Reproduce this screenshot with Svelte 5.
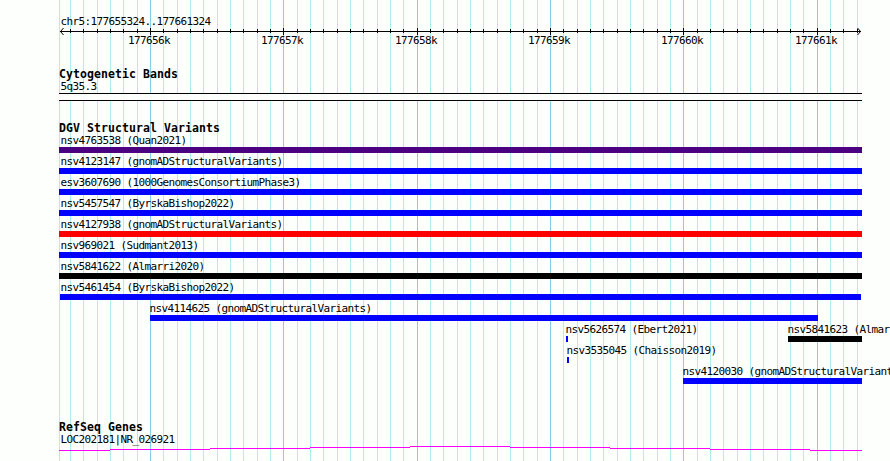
<script>
  const start = 177655324
  const end = 177661324
  const left = 60
  const scale = 800 / (end - start)

  const toX = (pos) => Math.round(left + (pos - start) * scale)

  const ticks = []
  for (let pos = Math.ceil(start / 100) * 100; pos <= end; pos += 100) {
    ticks.push({ pos, x: toX(pos), major: pos % 1000 === 0 })
  }
  const majorTicks = ticks.filter(t => t.major)

  // x1 / x2 are panel pixels, pad is the label offset from the bar
  const rows = [
    [{ name: 'nsv4763538 (Quan2021)', x1: 59, x2: 862, pad: 1.4, type: 'complex' }],
    [{ name: 'nsv4123147 (gnomADStructuralVariants)', x1: 59, x2: 862, pad: 1.4, type: 'gain' }],
    [{ name: 'esv3607690 (1000GenomesConsortiumPhase3)', x1: 59, x2: 862, pad: 1.4, type: 'gain' }],
    [{ name: 'nsv5457547 (ByrskaBishop2022)', x1: 59, x2: 862, pad: 1.4, type: 'gain' }],
    [{ name: 'nsv4127938 (gnomADStructuralVariants)', x1: 59, x2: 862, pad: 1.4, type: 'loss' }],
    [{ name: 'nsv969021 (Sudmant2013)', x1: 59, x2: 862, pad: 1.4, type: 'gain' }],
    [{ name: 'nsv5841622 (Almarri2020)', x1: 59, x2: 862, pad: 1.4, type: 'other' }],
    [{ name: 'nsv5461454 (ByrskaBishop2022)', x1: 60, x2: 861, pad: 0.4, type: 'gain' }],
    [{ name: 'nsv4114625 (gnomADStructuralVariants)', x1: 150, x2: 818, pad: -0.6, type: 'gain' }],
    [
      { name: 'nsv5626574 (Ebert2021)', x1: 566, x2: 568, pad: -0.6, type: 'gain' },
      { name: 'nsv5841623 (Almarri2020)', x1: 788, x2: 862, pad: -0.6, type: 'other' },
    ],
    [{ name: 'nsv3535045 (Chaisson2019)', x1: 567, x2: 569, pad: -0.6, type: 'gain' }],
    [{ name: 'nsv4120030 (gnomADStructuralVariants)', x1: 683, x2: 862, pad: -0.6, type: 'gain' }],
  ]

  const intron = 'M59 4.5H110M110 3.5H210M210 2.5H310M310 1.5H410M410 .5H510M510 1.5H610M610 2.5H710M710 3.5H810M810 4.5H862'
</script>

<main class="browser">
  <svg class="grid" width="890" height="461" aria-hidden="true">
    <rect class="minor" x="59" y="0" width="1" height="461" />
    {#each ticks as tick (tick.pos)}
      <rect class={tick.major ? 'major' : 'minor'} x={tick.x} y="0" width="1" height="461" />
    {/each}
  </svg>

  <header>
    <p class="label inset">chr5:177655324..177661324</p>
    <svg class="ruler" width="890" height="39">
      <rect x="60" y="3" width="801" height="1" />
      <path d="M63.5 0L60.5 3.5L63.5 7M857.5 0L860.5 3.5L857.5 7" />
      {#each ticks as tick (tick.pos)}
        <rect x={tick.x} y={tick.major ? 0 : 1} width="1" height={tick.major ? 7 : 4} />
      {/each}
      {#each majorTicks as tick (tick.pos)}
        <text x={tick.x - 22} y="16">{tick.pos / 1000}k</text>
      {/each}
    </svg>
  </header>

  <section class="cyto">
    <h2>Cytogenetic Bands</h2>
    <p class="label inset">5q35.3</p>
    <div class="band"></div>
  </section>

  <section class="variants">
    <h2>DGV Structural Variants</h2>
    <div class="rows">
      {#each rows as row}
        <div class="row">
          {#each row as f (f.name)}
            <div class="feature" style="margin-left:{f.x1}px">
              <p class="label" style="text-indent:{f.pad}px">{f.name}</p>
              <div class="bar {f.type}" style="width:{f.x2 - f.x1}px"></div>
            </div>
          {/each}
        </div>
      {/each}
    </div>
  </section>

  <section class="genes">
    <h2>RefSeq Genes</h2>
    <p class="label inset">LOC202181|NR_026921</p>
    <svg class="gene" width="890" height="15">
      <path d={intron} />
    </svg>
  </section>
</main>

<style>
  :global(body) {
    margin: 0;
    background: #fcfffc;
  }

  .browser {
    position: relative;
    display: flow-root;
    width: 890px;
    height: 461px;
    overflow: hidden;
    background: #fcfffc;
    color: #000;
    font-family: 'DejaVu Sans Mono', 'Liberation Mono', monospace;
  }

  .grid {
    position: absolute;
    inset: 0;
  }

  .minor { fill: #afeeee; }
  .major { fill: #87ceeb; }

  header,
  section {
    position: relative;
  }

  svg { display: block; }

  header {
    height: 51px;
    padding-top: 16px;
  }

  .label,
  .ruler text {
    font-size: 11px;
    letter-spacing: -0.622px;
  }

  .label {
    margin: 0;
    height: 12px;
    line-height: 11px;
    white-space: pre;
  }

  .inset { padding-left: 60.4px; }

  h2 {
    margin: 0;
    padding-left: 59px;
    height: 14px;
    font-size: 11.5px;
    line-height: 14px;
    font-weight: bold;
    letter-spacing: 0.077px;
  }

  .ruler path {
    fill: none;
    stroke: #000;
  }

  .band {
    width: 803px;
    height: 6px;
    margin-left: 59px;
    border: solid #000;
    border-width: 1px 0;
    background: #fcfffc;
  }

  .variants { margin-top: 20px; }
  .genes { margin-top: 36px; }

  .rows {
    display: flex;
    flex-direction: column;
    gap: 3px;
  }

  .row { display: grid; }

  .feature {
    grid-area: 1 / 1;
    min-width: 0;
  }

  .bar { height: 6px; }
  .gain { background: #00f; }
  .loss { background: #f00; }
  .complex { background: #4b0082; }
  .other { background: #000; }

  .gene path {
    fill: none;
    stroke: #f0f;
    shape-rendering: crispEdges;
  }
</style>
